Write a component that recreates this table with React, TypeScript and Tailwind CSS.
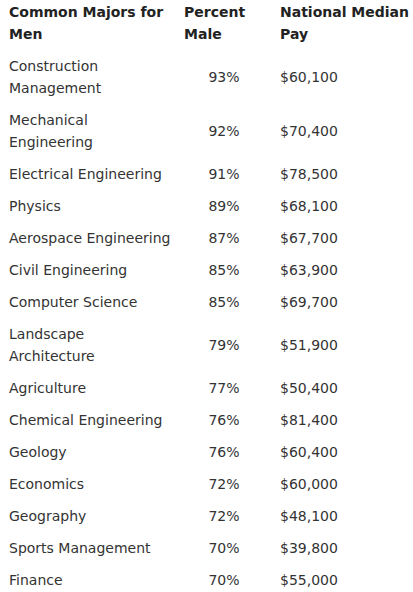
import React from 'react';

const rows: [string, string, string][] = [
  ['Construction Management', '93%', '$60,100'],
  ['Mechanical Engineering', '92%', '$70,400'],
  ['Electrical Engineering', '91%', '$78,500'],
  ['Physics', '89%', '$68,100'],
  ['Aerospace Engineering', '87%', '$67,700'],
  ['Civil Engineering', '85%', '$63,900'],
  ['Computer Science', '85%', '$69,700'],
  ['Landscape Architecture', '79%', '$51,900'],
  ['Agriculture', '77%', '$50,400'],
  ['Chemical Engineering', '76%', '$81,400'],
  ['Geology', '76%', '$60,400'],
  ['Economics', '72%', '$60,000'],
  ['Geography', '72%', '$48,100'],
  ['Sports Management', '70%', '$39,800'],
  ['Finance', '70%', '$55,000'],
];

export default function App() {
  return (
    <div className="w-[413px] h-[592px] overflow-hidden bg-white pl-[9px] text-[14px] leading-[22px] text-[#333333] font-['DejaVu_Sans',Verdana,sans-serif]">
      <div className="grid grid-cols-[175px_96px_1fr] pt-px pb-[5px] font-bold text-[#222222]">
        <div className="pr-[4px]">Common Majors for Men</div>
        <div className="pr-2">Percent Male</div>
        <div>National Median Pay</div>
      </div>
      {rows.map(([major, pct, pay], i) => (
        <div key={i} className="grid grid-cols-[175px_96px_1fr] items-center py-[5px]">
          <div className="pr-[12px]">{major}</div>
          <div className="w-[80px] text-center">{pct}</div>
          <div>{pay}</div>
        </div>
      ))}
    </div>
  );
}
